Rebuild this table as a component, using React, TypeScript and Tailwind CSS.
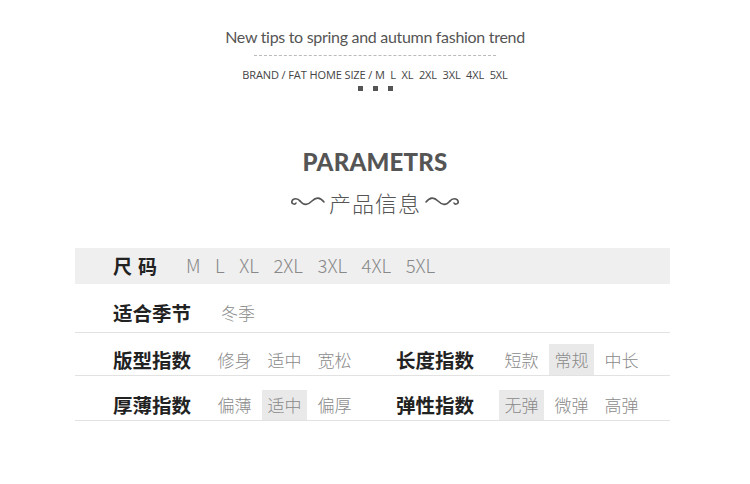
import React from "react";

const cjk = { fontFamily: '"Noto Sans CJK SC", "Noto Sans", sans-serif' };

function Opt({ t, hl }: { t: string; hl?: boolean }) {
  return (
    <div
      className={`w-[45px] mr-[5px] h-full flex items-center justify-center text-[17px] font-light text-[#8a8a8a] ${hl ? "bg-[#e9e9e9]" : ""}`}
    >
      {t}
    </div>
  );
}

function Squiggle({ flip }: { flip?: boolean }) {
  return (
    <svg width="36" height="14" viewBox="0 0 36 14">
      <g fill="none" stroke="#555" strokeWidth="1.6" strokeLinecap="round">
        {flip ? (
          <>
            <path d="M2 7 C6 2, 10 2, 14 6 S22 11, 26 6" />
            <path d="M26 6 C28 3, 33 3, 34 6 C35 9, 31 10, 30 8" />
          </>
        ) : (
          <>
            <path d="M34 7 C30 2, 26 2, 22 6 S14 11, 10 6" />
            <path d="M10 6 C8 3, 3 3, 2 6 C1 9, 5 10, 6 8" />
          </>
        )}
      </g>
    </svg>
  );
}

export default function App() {
  return (
    <div className="w-[750px] h-[484px] bg-white relative overflow-hidden" style={cjk}>
      <div className="flex flex-col items-center pt-[26px]">
        <div
          className="text-[16px] text-[#555] tracking-[-0.3px] leading-[22px]"
          style={{ fontFamily: 'Lato, sans-serif' }}
        >
          New tips to spring and autumn fashion trend
        </div>
        <div className="w-[242px] mt-[7px] border-t border-dashed border-[#bbb]" />
        <div
          className="mt-[12px] text-[11px] text-[#444] leading-[14px] tracking-[-0.1px]"
          style={{ fontFamily: '"Open Sans", sans-serif' }}
        >
          BRAND / FAT HOME SIZE / M&nbsp; L&nbsp; XL&nbsp; 2XL&nbsp; 3XL&nbsp; 4XL&nbsp; 5XL
        </div>
        <div className="flex gap-[10px] mt-[4px]">
          <div className="w-[5px] h-[5px] bg-[#555]" />
          <div className="w-[5px] h-[5px] bg-[#555]" />
          <div className="w-[5px] h-[5px] bg-[#555]" />
        </div>
        <div
          className="mt-[56px] text-[24px] font-black text-[#555] leading-[30px] tracking-[0.2px]"
          style={{ fontFamily: 'Lato, sans-serif' }}
        >
          PARAMETRS
        </div>
        <div className="mt-[10px] flex items-center gap-[3px]">
          <Squiggle />
          <div className="text-[22px] font-light text-[#555] leading-[30px] tracking-[1px]">产品信息</div>
          <Squiggle flip />
        </div>
      </div>

      <div className="absolute left-[75px] top-[248px] w-[595px]">
        <div className="h-[36px] bg-[#efefef] flex items-center pl-[38px]">
          <div className="text-[19px] font-bold text-[#222] w-[73px] tracking-[6px]">尺码</div>
          <div className="flex gap-[14.5px] text-[18.5px] font-light text-[#888]">
            <span>M</span>
            <span>L</span>
            <span>XL</span>
            <span>2XL</span>
            <span>3XL</span>
            <span>4XL</span>
            <span>5XL</span>
          </div>
        </div>
        <div className="h-[49px] border-b border-[#e2e2e2] flex items-center pl-[38px] pt-[10px]">
          <div className="text-[19.5px] font-bold text-[#222] w-[108px]">适合季节</div>
          <div className="text-[17px] font-light text-[#8a8a8a]">冬季</div>
        </div>
        <div className="h-[43px] border-b border-[#e2e2e2] flex items-end pl-[38px]">
          <div className="h-[31px] flex items-center w-[99px] text-[19.5px] font-bold text-[#222]">版型指数</div>
          <div className="h-[31px] flex w-[184px]">
            <Opt t="修身" />
            <Opt t="适中" />
            <Opt t="宽松" />
          </div>
          <div className="h-[31px] flex items-center w-[103px] text-[19.5px] font-bold text-[#222]">长度指数</div>
          <div className="h-[31px] flex">
            <Opt t="短款" />
            <Opt t="常规" hl />
            <Opt t="中长" />
          </div>
        </div>
        <div className="h-[45px] border-b border-[#e2e2e2] flex items-end pl-[38px]">
          <div className="h-[30px] flex items-center w-[99px] text-[19.5px] font-bold text-[#222]">厚薄指数</div>
          <div className="h-[30px] flex w-[184px]">
            <Opt t="偏薄" />
            <Opt t="适中" hl />
            <Opt t="偏厚" />
          </div>
          <div className="h-[30px] flex items-center w-[103px] text-[19.5px] font-bold text-[#222]">弹性指数</div>
          <div className="h-[30px] flex">
            <Opt t="无弹" hl />
            <Opt t="微弹" />
            <Opt t="高弹" />
          </div>
        </div>
      </div>
    </div>
  );
}
